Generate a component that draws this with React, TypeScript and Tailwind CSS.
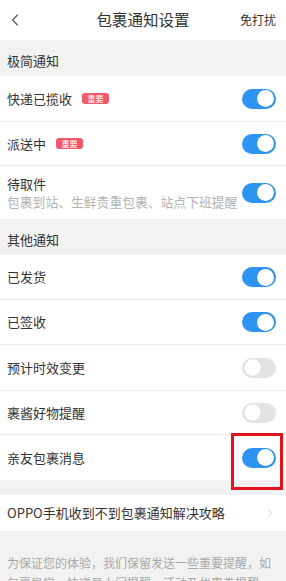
import { ChevronLeft, ChevronRight } from 'lucide-react'

type Item = { label: string; on: boolean; tag?: boolean; sub?: string; h?: string; marked?: boolean }

const simple: Item[] = [
  { label: '快递已揽收', on: true, tag: true, h: 'h-[46px]' },
  { label: '派送中', on: true, tag: true, h: 'h-[44px]' },
  { label: '待取件', on: true, sub: '包裹到站、生鲜贵重包裹、站点下班提醒', h: 'h-[53px]' },
]

const other: Item[] = [
  { label: '已发货', on: true, h: 'h-[45px]' },
  { label: '已签收', on: true, h: 'h-[45px]' },
  { label: '预计时效变更', on: false, h: 'h-[46px]' },
  { label: '裹酱好物提醒', on: false, h: 'h-[44px]' },
  { label: '亲友包裹消息', on: true, h: 'h-[45px]', marked: true },
]

function Toggle({ on }: { on: boolean }) {
  return (
    <div
      className={`flex h-[20px] w-[34px] shrink-0 items-center rounded-full px-[2px] ${
        on ? 'justify-end bg-[#2d94f1]' : 'justify-start bg-[#e3e3e3]'
      }`}
    >
      <div className="h-[17px] w-[17px] rounded-full bg-white shadow-[0_0_1px_rgba(0,0,0,0.25)]" />
    </div>
  )
}

function Row({ item, last }: { item: Item; last: boolean }) {
  return (
    <div
      className={`relative flex items-center justify-between bg-white pl-[7px] pr-[10px] ${item.h} ${
        last ? '' : 'border-b border-[#ececec]'
      }`}
    >
      <div className="flex flex-col">
        <div className="flex items-center gap-[10px]">
          <span className="text-[13px] leading-[18px] text-[#333]">{item.label}</span>
          {item.tag && (
            <span className="flex h-[11px] w-[27px] items-center justify-center rounded-[3px] bg-[#f2596b] text-[8px] leading-none text-white">
              重要
            </span>
          )}
        </div>
        {item.sub && <span className="text-[12.8px] leading-[17px] text-[#b3b3b3]">{item.sub}</span>}
      </div>
      <Toggle on={item.on} />
      {item.marked && (
        <div className="absolute left-[231px] top-[-2px] h-[57px] w-[52px] border-[3px] border-[#e3121c]" />
      )}
    </div>
  )
}

function Section({ title, items }: { title: string; items: Item[] }) {
  return (
    <div>
      <div className="flex h-[36px] items-end bg-[#f2f2f2] pb-[7px] pl-[7px] text-[13px] leading-[17px] text-[#333]">
        {title}
      </div>
      {items.map((item, i) => (
        <Row key={item.label} item={item} last={i === items.length - 1} />
      ))}
    </div>
  )
}

export default function App() {
  return (
    <div className="h-[581px] w-[286px] overflow-hidden bg-[#f2f2f2] font-['Noto_Sans_CJK_SC','Noto_Sans',sans-serif]">
      <header className="relative flex h-[40px] items-center justify-center bg-white">
        <ChevronLeft className="absolute left-[5px] top-[10px] h-[20px] w-[20px] text-[#555]" strokeWidth={1.3} />
        <span className="text-[15.5px] text-[#333]">包裹通知设置</span>
        <span className="absolute right-[10px] top-[12px] text-[12px] leading-[16px] text-[#333]">免打扰</span>
      </header>
      <Section title="极简通知" items={simple} />
      <Section title="其他通知" items={other} />
      <div className="mt-[15px] flex h-[36px] items-center justify-between bg-white pl-[7px] pr-[10px]">
        <span className="text-[13px] text-[#333]">OPPO手机收到不到包裹通知解决攻略</span>
        <ChevronRight className="h-[12px] w-[12px] text-[#c4c4c4]" strokeWidth={1.5} />
      </div>
      <p className="px-[7px] pt-[22px] text-[12px] leading-[20px] text-[#a8a8a8]">
        为保证您的体验，我们保留发送一些重要提醒，如包裹异常、快递员上门提醒、活动及优惠券提醒、
      </p>
    </div>
  )
}
